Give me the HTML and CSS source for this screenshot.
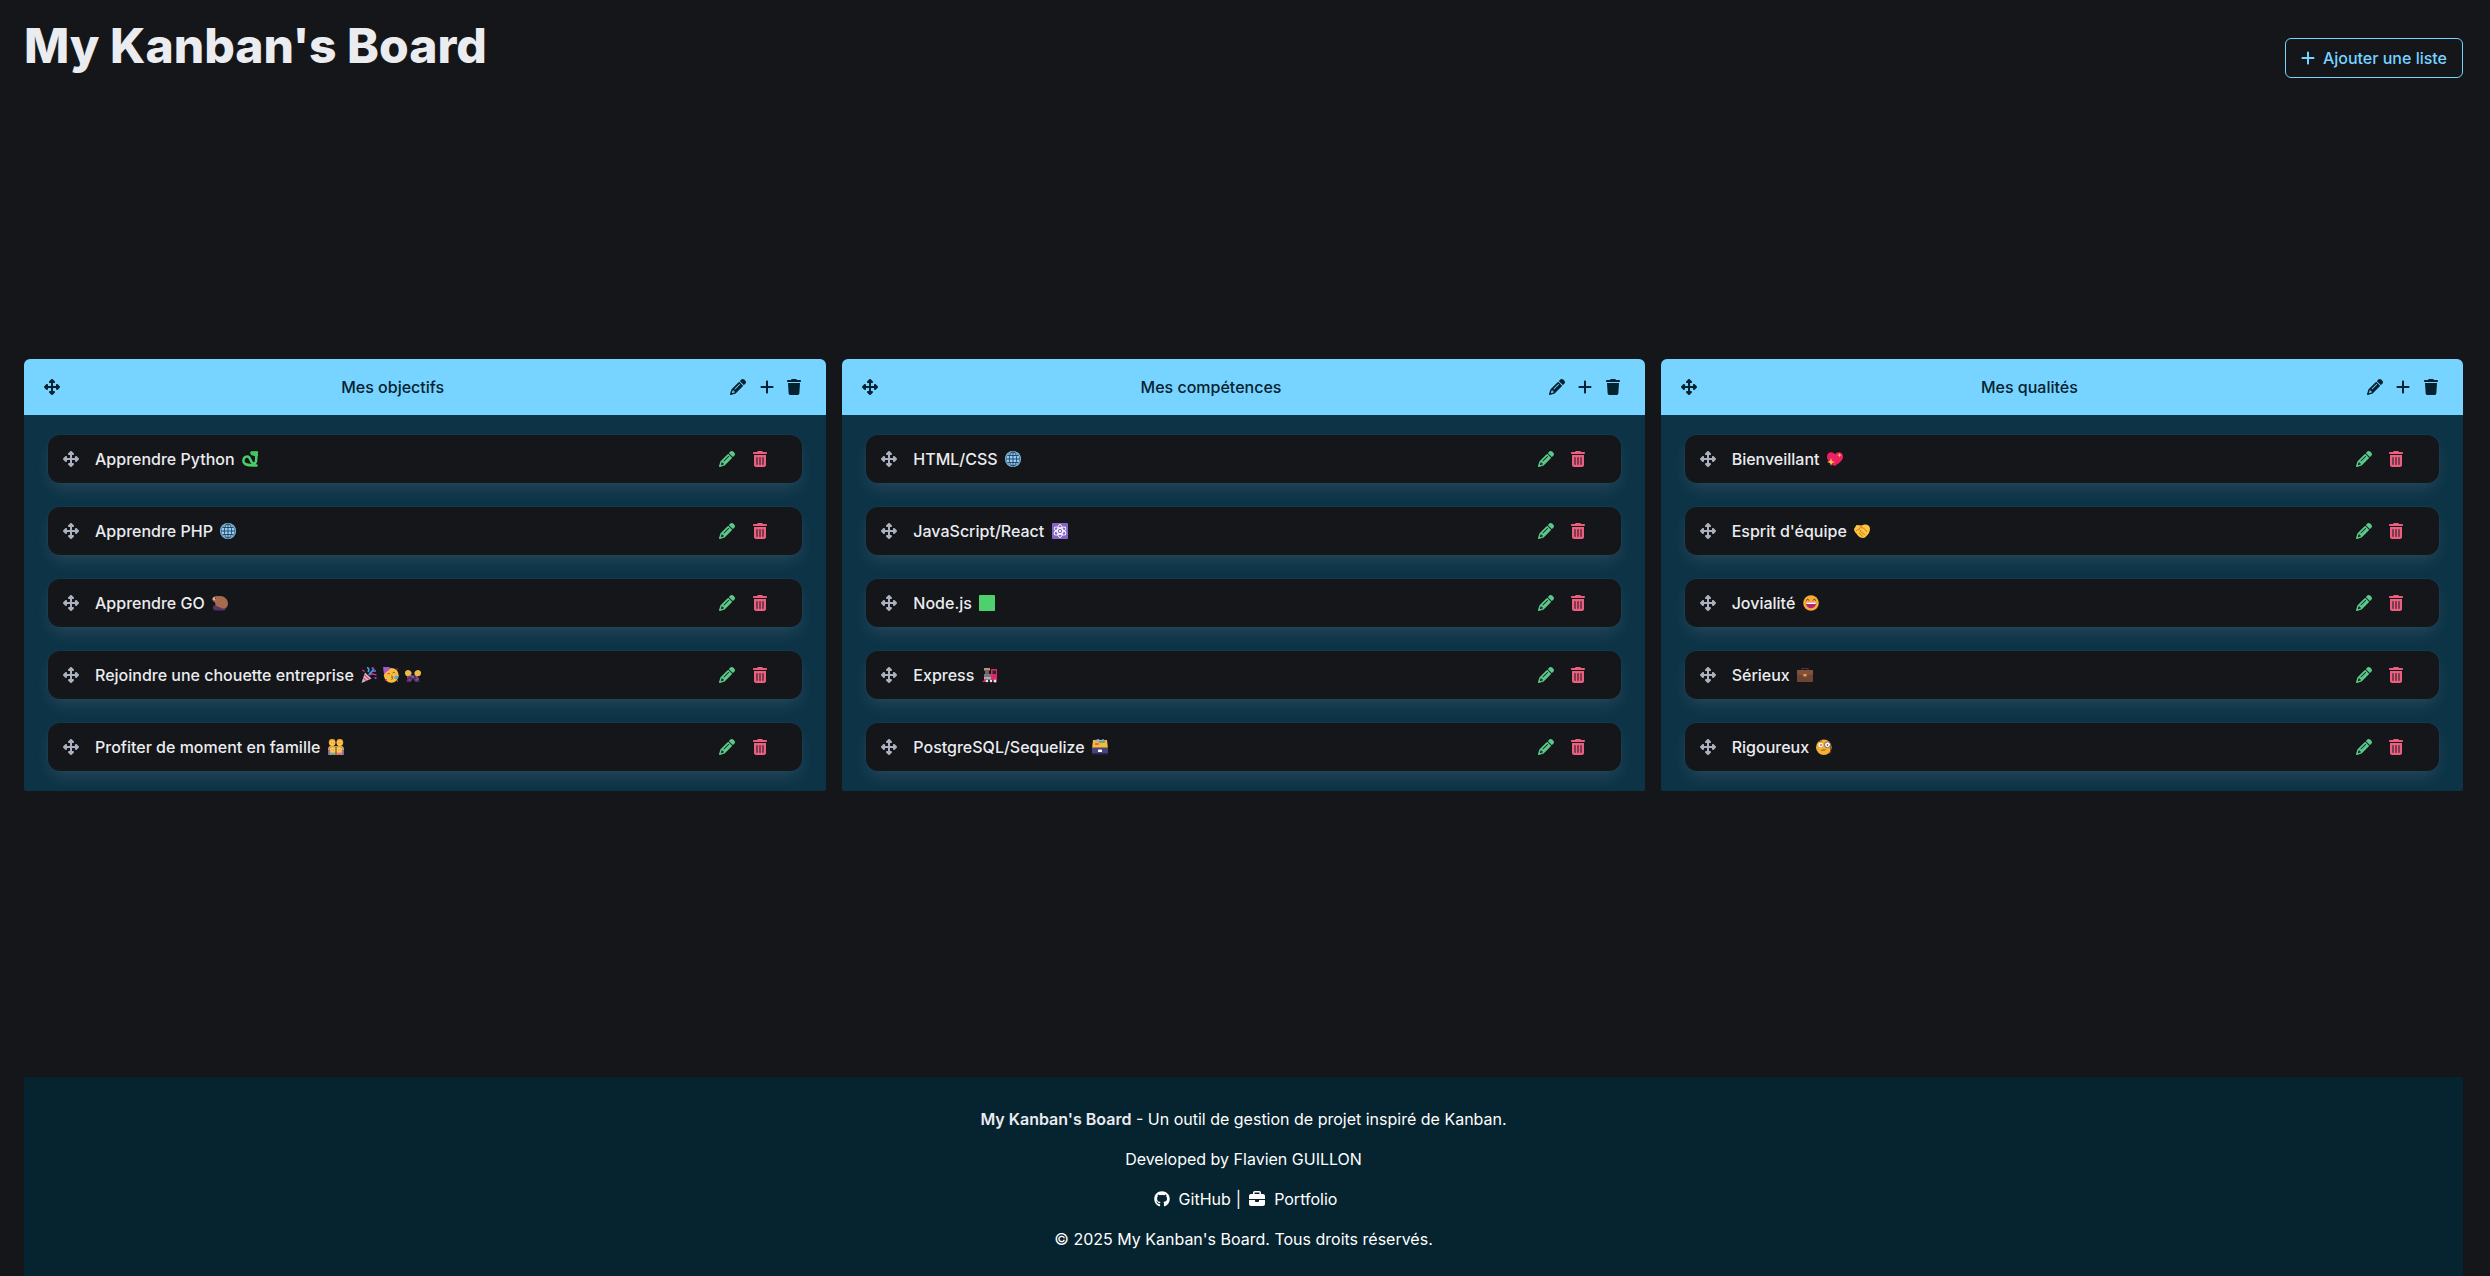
FILE: index.html
```html
<!DOCTYPE html>
<html lang="fr">
<head>
<meta charset="utf-8">
<title>My Kanban's Board</title>
<link rel="stylesheet" href="styles.css">
</head>
<body>
<svg class="sprite" aria-hidden="true">
<symbol id="move" viewBox="0 0 512 512"><path d="M278.6 9.4c-12.5-12.5-32.8-12.5-45.3 0l-64 64c-9.2 9.2-11.9 22.9-6.9 34.9s16.6 19.8 29.6 19.8h32v96H128V192c0-12.9-7.8-24.6-19.8-29.6s-25.7-2.2-34.9 6.9l-64 64c-12.5 12.5-12.5 32.8 0 45.3l64 64c9.2 9.2 22.9 11.9 34.9 6.9s19.8-16.6 19.8-29.6V288h96v96H192c-12.9 0-24.6 7.8-29.6 19.8s-2.2 25.7 6.9 34.9l64 64c12.5 12.5 32.8 12.5 45.3 0l64-64c9.2-9.2 11.9-22.9 6.9-34.9s-16.6-19.8-29.6-19.8H288V288h96v32c0 12.9 7.8 24.6 19.8 29.6s25.7 2.2 34.9-6.9l64-64c12.5-12.5 12.5-32.8 0-45.3l-64-64c-9.2-9.2-22.9-11.9-34.9-6.9s-19.8 16.6-19.8 29.6v32H288V128h32c12.9 0 24.6-7.8 29.6-19.8s2.2-25.7-6.9-34.9l-64-64z"/></symbol>
<symbol id="plus" viewBox="0 0 448 512"><path d="M256 80c0-17.7-14.3-32-32-32s-32 14.3-32 32V224H48c-17.7 0-32 14.3-32 32s14.3 32 32 32H192V432c0 17.7 14.3 32 32 32s32-14.3 32-32V288H400c17.7 0 32-14.3 32-32s-14.3-32-32-32H256V80z"/></symbol>
<symbol id="trash" viewBox="0 0 448 512"><path d="M135.2 17.7L128 32H32C14.3 32 0 46.3 0 64S14.3 96 32 96H416c17.7 0 32-14.3 32-32s-14.3-32-32-32H320l-7.2-14.3C307.4 6.8 296.3 0 284.2 0H163.8c-12.1 0-23.2 6.8-28.6 17.7zM416 128H32L53.2 467c1.6 25.3 22.6 45 47.9 45H346.9c25.3 0 46.3-19.7 47.9-45L416 128z"/></symbol>
<symbol id="can" viewBox="0 0 448 512"><path d="M135.2 17.7C140.6 6.8 151.7 0 163.8 0H284.2c12.1 0 23.2 6.8 28.6 17.7L320 32h96c17.7 0 32 14.3 32 32s-14.3 32-32 32H32C14.3 96 0 81.7 0 64S14.3 32 32 32h96l7.2-14.3zM32 128H416V448c0 35.3-28.7 64-64 64H96c-35.3 0-64-28.7-64-64V128zm96 64c-8.800 0-16 7.200-16 16V432c0 8.800 7.200 16 16 16s16-7.200 16-16V208c0-8.800-7.200-16-16-16zm96 0c-8.800 0-16 7.200-16 16V432c0 8.800 7.200 16 16 16s16-7.200 16-16V208c0-8.800-7.200-16-16-16zm96 0c-8.800 0-16 7.200-16 16V432c0 8.800 7.200 16 16 16s16-7.200 16-16V208c0-8.800-7.200-16-16-16z"/></symbol>
<symbol id="pencil" viewBox="0 0 512 512"><path d="M410.3 231l11.3-11.3-33.9-33.9-62.1-62.1L291.7 89.8l-11.3 11.3-22.6 22.6L58.6 322.900c-10.400 10.400-18 23.300-22.200 37.400L1 480.700c-2.500 8.400-.2 17.500 6.100 23.700s15.300 8.500 23.700 6.100l120.300-35.400c14.100-4.200 27-11.800 37.400-22.200L387.700 253.700 410.300 231zM160 399.400l-9.100 22.700c-4 3.100-8.500 5.400-13.300 6.900L59.400 452l23-78.100c1.400-4.900 3.800-9.400 6.900-13.300l22.700-9.100v32c0 8.800 7.200 16 16 16h32zM362.700 18.700L348.300 33.200 325.700 55.800 314.300 67.100l33.900 33.900 62.100 62.100 33.900 33.900 11.300-11.300 22.600-22.600 14.500-14.500c25-25 25-65.500 0-90.500L453.300 18.700c-25-25-65.500-25-90.500 0zm-47.400 168l-144 144c-6.200 6.200-16.400 6.200-22.600 0s-6.200-16.400 0-22.600l144-144c6.200-6.200 16.400-6.200 22.600 0s6.200 16.400 0 22.600z"/></symbol>
<symbol id="github" viewBox="0 0 496 512"><path d="M244.8 8C106.1 8 0 113.3 0 252c0 110.9 69.8 205.8 169.5 239.2 12.8 2.3 17.3-5.6 17.3-12.1 0-6.2-.3-40.4-.3-61.4 0 0-70 15-84.700-29.800 0 0-11.400-29.100-27.800-36.600 0 0-22.900-15.700 1.600-15.400 0 0 24.900 2 38.600 25.800 21.900 38.600 58.600 27.500 72.900 20.900 2.300-16 8.800-27.100 16-33.700-55.900-6.200-112.300-14.300-112.300-110.500 0-27.500 7.600-41.300 23.600-58.900-2.600-6.500-11.100-33.300 2.600-67.900 20.900-6.500 69 27 69 27 20-5.600 41.500-8.500 62.800-8.500s42.800 2.900 62.800 8.500c0 0 48.100-33.600 69-27 13.700 34.700 5.200 61.400 2.600 67.900 16 17.700 25.800 31.500 25.800 58.900 0 96.500-58.900 104.200-114.800 110.500 9.200 7.900 17 22.900 17 46.400 0 33.700-.3 75.400-.3 83.600 0 6.500 4.600 14.400 17.300 12.100C428.200 457.800 496 362.900 496 252 496 113.300 383.500 8 244.800 8z"/></symbol>
<symbol id="briefcase" viewBox="0 0 512 512"><path d="M184 48H328c4.400 0 8 3.600 8 8V96H176V56c0-4.400 3.600-8 8-8zm-56 8V96H64C28.700 96 0 124.700 0 160v96H192 320 512V160c0-35.300-28.700-64-64-64H384V56c0-30.900-25.100-56-56-56H184c-30.900 0-56 25.100-56 56zM512 288H320v32c0 17.700-14.300 32-32 32H224c-17.700 0-32-14.300-32-32V288H0V416c0 35.300 28.700 64 64 64H448c35.300 0 64-28.700 64-64V288z"/></symbol>
<symbol id="snake" viewBox="0 0 16 16"><path d="M9.500 1.800h4.800v2.700c0 4 .2 8-2.500 8-3.600 0-2.800-7-6.300-7-3.800 0-4.800 3.700-3.600 6.200 1.300 2.500 4.600 2.800 12.600 2.800" fill="none" stroke="#4ccb67" stroke-width="2.500" stroke-linecap="round"/><path d="M8.500 1.500C9 .3 10.500.2 12 .2h4v5h-3L9 4z" fill="#45c463"/></symbol>
<symbol id="globe" viewBox="0 0 16 16"><circle cx="8" cy="8" r="8" fill="#93cdf7"/><g fill="none" stroke="#17344d" stroke-width=".8"><circle cx="8" cy="8" r="6.900" stroke-width=".5"/><ellipse cx="8" cy="8" rx="3.700" ry="7"/><path d="M8 1v14M1 8h14M2.500 4.500h11M2.500 11.500h11"/></g></symbol>
<symbol id="rodent" viewBox="0 0 16 16"><path d="M1 12.500c0-2 1.500-2.500 4-2.500l9 3.500c-.5 1.500-1.500 2-3 2H4c-2.200 0-3-1.200-3-3z" fill="#533566"/><path d="M.5 4C.8 2 2.500 1 4 1.200 4.500.5 5.500.5 6 1.200 11-.2 16 3.500 16 8.500c0 3.800-2.500 5.500-5.500 5L4.500 11C2.500 10 4 8 2.500 7 1 6.500.2 5.500.5 4z" fill="#a66a4d"/><path d="M.5 4.500c0-1.500 1-2.500 2.500-2l.5 3z" fill="#e0b399"/><circle cx="3.500" cy="3.500" r=".6" fill="#372832"/></symbol>
<symbol id="popper" viewBox="0 0 16 16"><path d="M4 5.500l6.500 6L.5 16z" fill="#c7bec7"/><path d="M3.500 8l5 4.500M2.500 11l3 2.800" stroke="#f04776" stroke-width="1.300"/><path d="M6 .5c2.500 1 2 3 1 4.500M8 8c2-4 3-2 5-6.500" stroke="#31a9ee" stroke-width="1.700" fill="none"/><path d="M8.500 8c3-2 5-.5 7 0M11 2l1-2M1.500 3l2 1.500" stroke="#d73496" stroke-width="1.500" fill="none"/><path d="M10 5.500h1M13.500 11h2M12 4h3" stroke="#8f6adc" stroke-width="1.500"/></symbol>
<symbol id="partying" viewBox="0 0 16 16"><circle cx="8.300" cy="8.300" r="7.400" fill="#f9bd3d"/><path d="M0 0h6L8 1.300 1 7z" fill="#8e5fda"/><path d="M3 1l1.500 3M1 3l1 3" stroke="#ef4783"/><path d="M4.500 7c1-1 2-.8 2.500.2M9.500 6c1-1 2-.8 2.500.2M8 9c2 0 2 1.400.7 1.600 1.300.2 1.300 1.800-.4 1.800" fill="none" stroke="#774637" stroke-width=".9"/><path d="M10.500 11l2.500-2.500 2.500.8-1.500 3z" fill="#3baee3"/><path d="M2 13h2M13.500 2h1M14 14h1" stroke="#d83278" stroke-width="1.500"/></symbol>
<symbol id="hands" viewBox="0 0 16 16"><path d="M3 8h10l1.500 7h-4L8 12l-2.500 3h-4z" fill="#50306a"/><path d="M0 5.500C.3 2 5.500 2 6.500 5.500c.4 1.500-.3 3-1.500 3.500L1.500 9C.5 8.500-.2 7 0 5.500zM9.500 5.500C10.500 2 15.700 2 16 5.500c.2 1.500-.5 3-1.500 3.500L11 9c-1.200-.5-1.900-2-1.500-3.500z" fill="#efb743"/><path d="M2 10h1.500M6 9.500h1.500M11 10h1.500M4 13h1.500M10.500 13H12" stroke="#db3c90" stroke-width="1.400"/><path d="M5 7.500v2M13 11v2M8 9v2" stroke="#37a2cf"/></symbol>
<symbol id="family" viewBox="0 0 16 16"><path d="M0 11c0-3 1-4 2-4h12c1 0 2 1 2 4v5H0z" fill="#d79a58"/><path d="M0 11h1.800v5H0zM14.200 11H16v5h-1.800z" fill="#7d67be"/><circle cx="4.200" cy="3.500" r="3.400" fill="#f5a92e"/><circle cx="11.800" cy="3.500" r="3.400" fill="#f5a92e"/><circle cx="4.300" cy="4.200" r="2.600" fill="#ffc94c"/><circle cx="11.700" cy="4.200" r="2.600" fill="#ffc94c"/><circle cx="4.800" cy="11" r="2.700" fill="#ffcc4d"/><circle cx="11.200" cy="11" r="2.700" fill="#ffcc4d"/><path d="M3 14.200h3.500V16H3z" fill="#3eb7a3"/><path d="M9.500 14.200H13V16H9.500z" fill="#e36590"/><path d="M7.600 8h.8v8h-.8z" fill="#4a4268"/><path d="M3 4h.7M4.900 4h.7M10.700 4h.7M12.500 4h.7M3.600 11h.7M5.500 11h.7M10 11h.7M12 11h.7" stroke="#8a552d" stroke-width=".8"/></symbol>
<symbol id="atom" viewBox="0 0 16 16"><rect width="16" height="16" rx="1" fill="#8565c4"/><g fill="none" stroke="#fff" stroke-width=".9"><ellipse cx="8" cy="8" rx="6.500" ry="2.600" transform="rotate(30 8 8)"/><ellipse cx="8" cy="8" rx="6.500" ry="2.600" transform="rotate(90 8 8)"/><ellipse cx="8" cy="8" rx="6.500" ry="2.600" transform="rotate(150 8 8)"/></g><circle cx="8" cy="8" r="1.100" fill="#fff"/></symbol>
<symbol id="square" viewBox="0 0 16 16"><rect width="16" height="16" rx=".7" fill="#4ed16c"/></symbol>
<symbol id="train" viewBox="0 0 16 16"><path d="M2 1h6v3H7v3H3V4H2z" fill="#6c6469"/><path d="M2 1h6v2H2z" fill="#bc936b"/><path d="M2 7h8v6H2z" fill="#77777c"/><path d="M9 2h6v11H9zM0 15l4-4v4z" fill="#df2764"/><path d="M10.500 3.500H14V7h-3.500z" fill="#292434"/><path d="M2 10h7v2H2z" fill="#aaaab0"/><circle cx="5" cy="14" r="1.300" fill="#e8e4e8"/><circle cx="9" cy="14" r="1.300" fill="#e8e4e8"/><circle cx="13" cy="14" r="1.600" fill="#e8e4e8"/></symbol>
<symbol id="cabinet" viewBox="0 0 16 16"><path d="M1 1h14l1 9H0z" fill="#f5bd37"/><path d="M3 1l4-1 1 2 3-2 3 2v1H3z" fill="#b7a7c7"/><path d="M7 3h5V1.500" stroke="#43ac70" stroke-width="1.500" fill="none"/><path d="M3 5h4" stroke="#ed4c44" stroke-width="1.500"/><path d="M0 8.500h16V15H0z" fill="#48437a"/><path d="M0 14h16v1.500H0z" fill="#2c2551"/><rect x="6" y="10.500" width="4" height="2.500" rx=".5" fill="#fff"/></symbol>
<symbol id="heart" viewBox="0 0 16 16"><path d="M8 3.500C10-.2 16 .5 16 5.500c0 4-4 7-8.500 9.500C3 12.500 0 9.500 0 5.500 0 .8 6-.2 8 3.500z" fill="#f01e65"/><path d="M4 7l1 3 3 1-3 1-1 3-1-3-3-1 3-1zM12.500 2l.6 1.600 1.600.6-1.600.6-.6 1.600-.6-1.600-1.600-.6 1.600-.6z" fill="#ffc83d"/></symbol>
<symbol id="handshake" viewBox="0 0 16 16"><path d="M0 6l2.500-4 5 .5 2-.8c4-.7 6.500 1 6.500 4.300 0 3-2 6-5 8.500-1.500 1-6 .5-8-3C2 10 0 8.500 0 6z" fill="#ffc33d"/><path d="M2 8c2-2 3.500-2 5 0M5 6l3-3.500M7 5c2-1 4 1 6 4M6 8l5 4M5 10l4 3.500" fill="none" stroke="#bc762c" stroke-width=".9"/></symbol>
<symbol id="grin" viewBox="0 0 16 16"><circle cx="8" cy="8" r="7.800" fill="#f9aa33"/><path d="M3 5.500l1.700-1.200L6.200 5.500M9.800 5.500l1.500-1.200L13 5.500" fill="none" stroke="#563343" stroke-width="1"/><path d="M2.800 7.500h10.400c0 3.300-2.200 5.700-5.200 5.700s-5.200-2.400-5.200-5.700z" fill="#b12574"/><path d="M3 7.500h10l-.4 1.500H3.400z" fill="#fff"/></symbol>
<symbol id="bag" viewBox="0 0 16 16"><path d="M5 4V1.500h6V4" fill="none" stroke="#4c3940" stroke-width="1.200"/><rect y="3" width="16" height="12" rx="1" fill="#6d4534"/><path d="M0 4c0-.6.4-1 1-1h14c.6 0 1 .4 1 1v3c-5 2-11 2-16 0z" fill="#85503a"/><rect x="6.500" y="7" width="3" height="2.500" fill="#eaa33a"/></symbol>
<symbol id="monocle" viewBox="0 0 16 16"><circle cx="7.800" cy="8.200" r="7.800" fill="#f6af35"/><circle cx="4.600" cy="6" r="2.200" fill="#fff"/><circle cx="11.500" cy="5.800" r="2.900" fill="#fff" stroke="#62424a" stroke-width=".8"/><circle cx="5" cy="6" r=".8" fill="#38252e"/><circle cx="11.500" cy="6" r=".8" fill="#38252e"/><path d="M3 2.500l3-.7M14.500 7c0 3 .8 5-.8 8M5.500 11.500c2-1.500 3 .5 4-1" fill="none" stroke="#684333" stroke-width=".9"/></symbol>
</svg>

<header class="topbar">
  <h1>My Kanban's Board</h1>
  <button class="add-list"><svg class="icon narrow"><use href="#plus"/></svg><span>Ajouter une liste</span></button>
</header>

<main class="board">
  <section class="list">
    <div class="list-head"><svg class="icon"><use href="#move"/></svg><h2>Mes objectifs</h2><svg class="icon"><use href="#pencil"/></svg><svg class="icon narrow"><use href="#plus"/></svg><svg class="icon narrow"><use href="#trash"/></svg></div>
    <div class="cards">
      <article class="card"><svg class="icon move"><use href="#move"/></svg><p>Apprendre Python <svg class="emoji"><use href="#snake"/></svg></p><svg class="icon edit"><use href="#pencil"/></svg><svg class="icon narrow remove"><use href="#can"/></svg></article>
      <article class="card"><svg class="icon move"><use href="#move"/></svg><p>Apprendre PHP <svg class="emoji"><use href="#globe"/></svg></p><svg class="icon edit"><use href="#pencil"/></svg><svg class="icon narrow remove"><use href="#can"/></svg></article>
      <article class="card"><svg class="icon move"><use href="#move"/></svg><p>Apprendre GO <svg class="emoji"><use href="#rodent"/></svg></p><svg class="icon edit"><use href="#pencil"/></svg><svg class="icon narrow remove"><use href="#can"/></svg></article>
      <article class="card"><svg class="icon move"><use href="#move"/></svg><p>Rejoindre une chouette entreprise <svg class="emoji"><use href="#popper"/></svg><svg class="emoji next"><use href="#partying"/></svg><svg class="emoji next"><use href="#hands"/></svg></p><svg class="icon edit"><use href="#pencil"/></svg><svg class="icon narrow remove"><use href="#can"/></svg></article>
      <article class="card"><svg class="icon move"><use href="#move"/></svg><p>Profiter de moment en famille <svg class="emoji"><use href="#family"/></svg></p><svg class="icon edit"><use href="#pencil"/></svg><svg class="icon narrow remove"><use href="#can"/></svg></article>
    </div>
  </section>

  <section class="list">
    <div class="list-head"><svg class="icon"><use href="#move"/></svg><h2>Mes compétences</h2><svg class="icon"><use href="#pencil"/></svg><svg class="icon narrow"><use href="#plus"/></svg><svg class="icon narrow"><use href="#trash"/></svg></div>
    <div class="cards">
      <article class="card"><svg class="icon move"><use href="#move"/></svg><p>HTML/CSS <svg class="emoji"><use href="#globe"/></svg></p><svg class="icon edit"><use href="#pencil"/></svg><svg class="icon narrow remove"><use href="#can"/></svg></article>
      <article class="card"><svg class="icon move"><use href="#move"/></svg><p>JavaScript/React <svg class="emoji"><use href="#atom"/></svg></p><svg class="icon edit"><use href="#pencil"/></svg><svg class="icon narrow remove"><use href="#can"/></svg></article>
      <article class="card"><svg class="icon move"><use href="#move"/></svg><p>Node.js <svg class="emoji"><use href="#square"/></svg></p><svg class="icon edit"><use href="#pencil"/></svg><svg class="icon narrow remove"><use href="#can"/></svg></article>
      <article class="card"><svg class="icon move"><use href="#move"/></svg><p>Express <svg class="emoji"><use href="#train"/></svg></p><svg class="icon edit"><use href="#pencil"/></svg><svg class="icon narrow remove"><use href="#can"/></svg></article>
      <article class="card"><svg class="icon move"><use href="#move"/></svg><p>PostgreSQL/Sequelize <svg class="emoji"><use href="#cabinet"/></svg></p><svg class="icon edit"><use href="#pencil"/></svg><svg class="icon narrow remove"><use href="#can"/></svg></article>
    </div>
  </section>

  <section class="list">
    <div class="list-head"><svg class="icon"><use href="#move"/></svg><h2>Mes qualités</h2><svg class="icon"><use href="#pencil"/></svg><svg class="icon narrow"><use href="#plus"/></svg><svg class="icon narrow"><use href="#trash"/></svg></div>
    <div class="cards">
      <article class="card"><svg class="icon move"><use href="#move"/></svg><p>Bienveillant <svg class="emoji"><use href="#heart"/></svg></p><svg class="icon edit"><use href="#pencil"/></svg><svg class="icon narrow remove"><use href="#can"/></svg></article>
      <article class="card"><svg class="icon move"><use href="#move"/></svg><p>Esprit d'équipe <svg class="emoji"><use href="#handshake"/></svg></p><svg class="icon edit"><use href="#pencil"/></svg><svg class="icon narrow remove"><use href="#can"/></svg></article>
      <article class="card"><svg class="icon move"><use href="#move"/></svg><p>Jovialité <svg class="emoji"><use href="#grin"/></svg></p><svg class="icon edit"><use href="#pencil"/></svg><svg class="icon narrow remove"><use href="#can"/></svg></article>
      <article class="card"><svg class="icon move"><use href="#move"/></svg><p>Sérieux <svg class="emoji"><use href="#bag"/></svg></p><svg class="icon edit"><use href="#pencil"/></svg><svg class="icon narrow remove"><use href="#can"/></svg></article>
      <article class="card"><svg class="icon move"><use href="#move"/></svg><p>Rigoureux <svg class="emoji"><use href="#monocle"/></svg></p><svg class="icon edit"><use href="#pencil"/></svg><svg class="icon narrow remove"><use href="#can"/></svg></article>
    </div>
  </section>
</main>

<footer class="footer">
  <p><strong>My Kanban's Board</strong> - Un outil de gestion de projet inspiré de Kanban.</p>
  <p>Developed by Flavien GUILLON</p>
  <p class="links"><a><svg class="icon"><use href="#github"/></svg>GitHub</a><span class="bar">|</span><a><svg class="icon"><use href="#briefcase"/></svg>Portfolio</a></p>
  <p>© 2025 My Kanban's Board. Tous droits réservés.</p>
</footer>
</body>
</html>
```
FILE: styles.css
```css
* { box-sizing: border-box; margin: 0; padding: 0; }
body {
  height: 1276px;
  padding: 0 27px 0 24px;
  display: flex;
  flex-direction: column;
  overflow: hidden;
  background: #14161a;
  color: #ebecf0;
  font: 400 16px/24px Inter, sans-serif;
}
.sprite { display: none; }
.icon { width: 16px; height: 16px; flex: none; fill: currentColor; }
.icon.narrow { width: 14px; }

.topbar { display: flex; justify-content: space-between; align-items: flex-start; height: 73px; }
.topbar h1 { padding-top: 19px; font-size: 48px; line-height: 54px; font-weight: 800; }
.add-list {
  display: flex;
  align-items: center;
  gap: 8px;
  height: 40px;
  margin-top: 38px;
  padding: 0 15px;
  border: 1px solid #77d3ff;
  border-radius: 6px;
  background: transparent;
  color: #77d3ff;
  font: 500 16px/24px Inter, sans-serif;
}

.board { flex: 1; display: grid; grid-template-columns: repeat(3, 1fr); gap: 16px; align-content: center; }
.list { border-radius: 6px 6px 2px 2px; background: #0d3347; overflow: hidden; }
.list-head {
  display: flex;
  align-items: center;
  gap: 13.5px;
  height: 56px;
  padding: 0 25px 0 20px;
  background: #77d3ff;
  color: #04222f;
}
.list-head h2 { flex: 1; padding-right: 5px; text-align: center; font-size: 16px; font-weight: 500; }
.cards { display: grid; gap: 24px; padding: 20px 24px; }
.card {
  display: flex;
  align-items: center;
  height: 48px;
  padding: 0 35.5px 0 15px;
  border-radius: 12px;
  background: #14161a;
  box-shadow: 0 8px 16px -2px rgba(235, 236, 240, .1), 0 0 0 1px rgba(235, 236, 240, .02);
  font-weight: 500;
}
.card p { flex: 1; display: flex; align-items: center; margin-left: 16px; white-space: pre; }
.emoji { width: 16px; height: 16px; margin-left: 3px; }
.emoji.next { margin-left: 6px; }
.move { color: #abb1bf; }
.edit { margin-right: 17.5px; color: #5bc98a; }
.remove { color: #ec5f80; }

.footer { display: grid; align-content: start; gap: 16px; height: 199px; padding-top: 30px; background: #062430; color: #fff; text-align: center; }
.footer strong { font-weight: 600; color: #ebecf0; }
.links, .links a { display: flex; align-items: center; justify-content: center; }
.links { padding-left: 4px; }
.links .icon { margin-right: 9px; }
.bar { margin: 0 8px 0 5px; }
```
